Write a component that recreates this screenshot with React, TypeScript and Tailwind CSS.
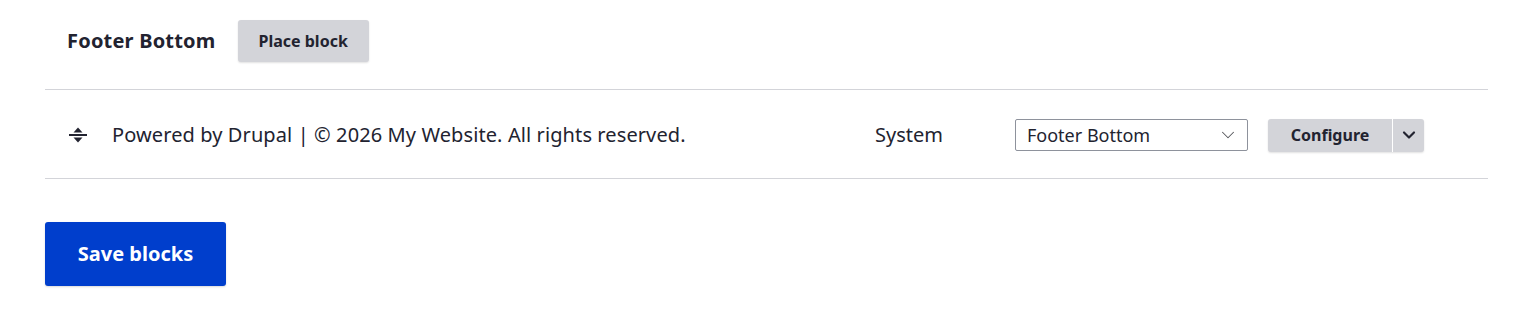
import { ChevronDown } from 'lucide-react';

function DragHandle() {
  return (
    <svg width="18" height="18" viewBox="0 0 18 18" className="shrink-0">
      <path d="M9 1.5 L13.5 6.5 H4.5 Z" fill="#222330" />
      <rect x="0" y="8" width="18" height="2" fill="#222330" />
      <path d="M9 16.5 L13.5 11.5 H4.5 Z" fill="#222330" />
    </svg>
  );
}

export default function App() {
  return (
    <div className="w-[1536px] h-[316px] bg-white text-[#222330] font-['Noto_Sans',sans-serif]">
      <div className="ml-[45px] w-[1443px]">
        {/* Region header */}
        <div className="flex items-center h-[90px] pb-[8px] border-b border-[#d3d4d9]">
          <h2 className="ml-[22px] text-[20px] font-bold tracking-[0.2px]">Footer Bottom</h2>
          <button className="ml-[22px] h-[42px] px-[21px] rounded-[3px] bg-[#d3d4d9] text-[16px] font-bold shadow-[0_1px_2px_rgba(0,0,0,0.12)]">
            Place block
          </button>
        </div>

        {/* Block row */}
        <div className="flex items-center h-[89px] pt-[2px] border-b border-[#d3d4d9]">
          <div className="ml-[24px] mr-[25px]">
            <DragHandle />
          </div>
          <span className="w-[763px] text-[20px] tracking-[0.1px]">
            Powered by Drupal | © 2026 My Website. All rights reserved.
          </span>
          <span className="w-[140px] text-[20px]">System</span>
          <div className="flex items-center justify-between w-[233px] h-[32px] pl-[11px] pr-[8px] border border-[#8e929c] rounded-[2px] text-[18px]">
            <span>Footer Bottom</span>
            <ChevronDown className="w-[22px] h-[22px] text-[#55565b]" strokeWidth={1.1} />
          </div>
          <div className="flex ml-[20px] h-[33px] rounded-[3px] bg-[#d3d4d9] shadow-[0_1px_2px_rgba(0,0,0,0.12)]">
            <button className="w-[125px] text-[16px] font-bold border-r border-white">Configure</button>
            <button className="w-[31px] flex items-center justify-center">
              <ChevronDown className="w-[20px] h-[20px] text-[#222330]" strokeWidth={2.6} />
            </button>
          </div>
        </div>

        {/* Save */}
        <button className="mt-[43px] w-[181px] h-[64px] rounded-[3px] bg-[#003ecc] text-white text-[20px] font-bold shadow-[0_1px_2px_rgba(0,0,0,0.15)]">
          Save blocks
        </button>
      </div>
    </div>
  );
}
